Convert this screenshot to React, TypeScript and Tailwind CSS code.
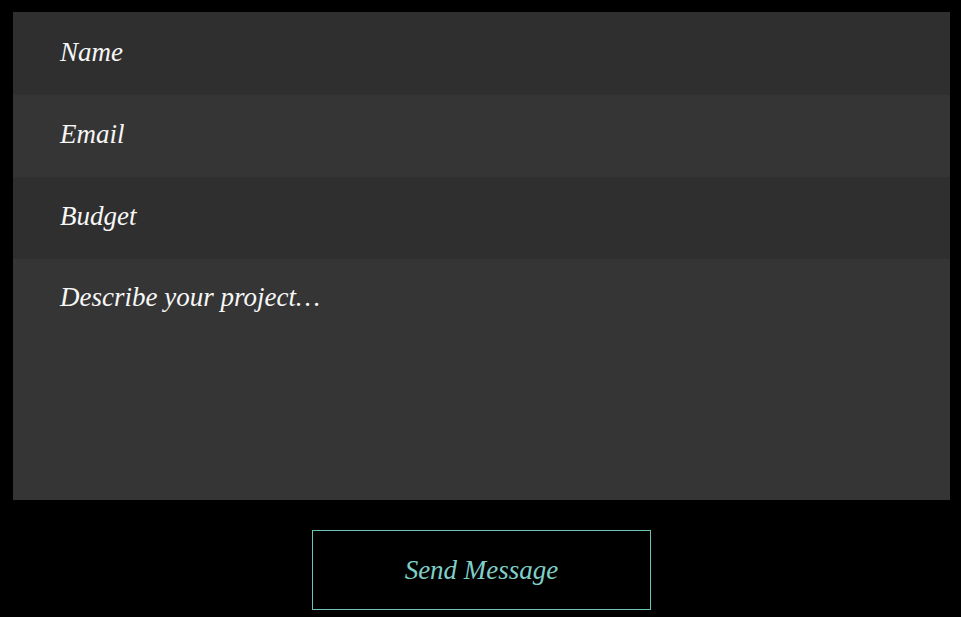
export default function App() {
  const font = { fontFamily: '"Liberation Serif", "Times New Roman", serif' };
  return (
    <div className="min-h-[617px] w-full bg-black pt-[12px] pl-[13px] pr-[11px]" style={font}>
      <div className="flex flex-col italic text-[27px] text-[#f7f7f7] leading-[31px]">
        <div className="h-[83px] bg-[#2f2f2f] pl-[47px] pt-[25px]">Name</div>
        <div className="h-[82px] bg-[#353535] pl-[47px] pt-[24px]">Email</div>
        <div className="h-[82px] bg-[#2f2f2f] pl-[47px] pt-[24px]">Budget</div>
        <div className="h-[241px] bg-[#353535] pl-[47px] pt-[23px]">Describe your project…</div>
      </div>
      <div className="flex justify-center pt-[30px]">
        <div className="flex h-[80px] w-[339px] items-center justify-center border border-[#6cc4bb] pt-[1px] text-[27px] italic text-[#7fcfc7]">
          Send Message
        </div>
      </div>
    </div>
  );
}
